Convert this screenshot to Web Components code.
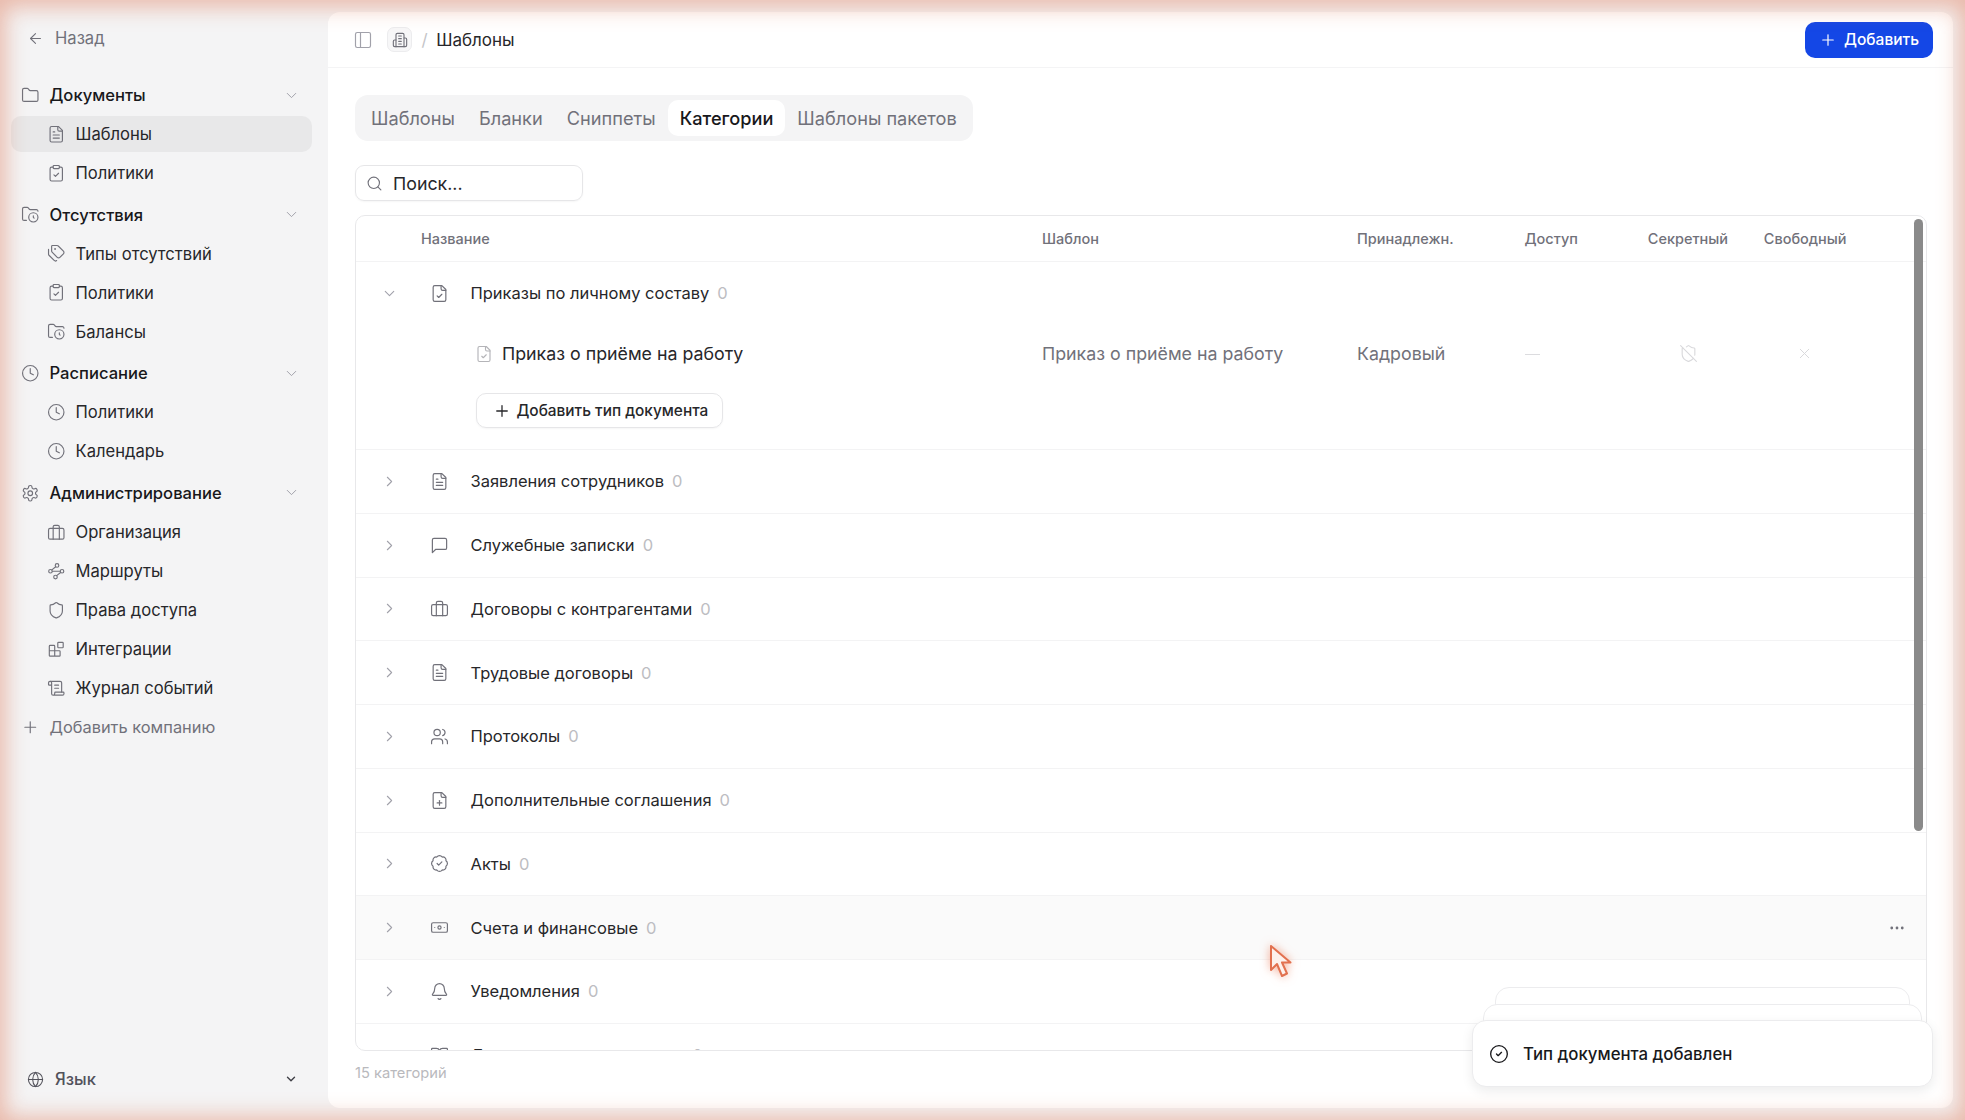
<!DOCTYPE html>
<html lang="ru">
<head>
<meta charset="utf-8">
<title>Шаблоны</title>
<style>
  html, body { margin: 0; height: 100%; overflow: hidden; }
  body { font-family: Inter, "Liberation Sans", sans-serif; background: #f4f4f5; color: #18181b; }
</style>
</head>
<body>
<app-shell>
  <side-nav slot="side">
    <nav-section label="Документы" icon="folder">
      <nav-item icon="file-text" active>Шаблоны</nav-item>
      <nav-item icon="clipboard-check">Политики</nav-item>
    </nav-section>
    <nav-section label="Отсутствия" icon="folder-clock">
      <nav-item icon="tags">Типы отсутствий</nav-item>
      <nav-item icon="clipboard-check">Политики</nav-item>
      <nav-item icon="folder-clock">Балансы</nav-item>
    </nav-section>
    <nav-section label="Расписание" icon="clock">
      <nav-item icon="clock">Политики</nav-item>
      <nav-item icon="clock">Календарь</nav-item>
    </nav-section>
    <nav-section label="Администрирование" icon="settings">
      <nav-item icon="briefcase">Организация</nav-item>
      <nav-item icon="waypoints">Маршруты</nav-item>
      <nav-item icon="shield">Права доступа</nav-item>
      <nav-item icon="blocks">Интеграции</nav-item>
      <nav-item icon="scroll">Журнал событий</nav-item>
    </nav-section>
  </side-nav>
  <main-panel>
    <top-bar slot="top" crumb="Шаблоны"></top-bar>
    <tab-bar>
      <tab-item>Шаблоны</tab-item>
      <tab-item>Бланки</tab-item>
      <tab-item>Сниппеты</tab-item>
      <tab-item active>Категории</tab-item>
      <tab-item>Шаблоны пакетов</tab-item>
    </tab-bar>
    <search-box placeholder="Поиск..."></search-box>
    <cat-table>
      <cat-row name="Приказы по личному составу" icon="file-check" open>
        <cat-type name="Приказ о приёме на работу" template="Приказ о приёме на работу" owner="Кадровый"></cat-type>
        <add-button>Добавить тип документа</add-button>
      </cat-row>
      <cat-row name="Заявления сотрудников" icon="file-text"></cat-row>
      <cat-row name="Служебные записки" icon="message"></cat-row>
      <cat-row name="Договоры с контрагентами" icon="briefcase"></cat-row>
      <cat-row name="Трудовые договоры" icon="file-text"></cat-row>
      <cat-row name="Протоколы" icon="users"></cat-row>
      <cat-row name="Дополнительные соглашения" icon="file-plus"></cat-row>
      <cat-row name="Акты" icon="badge-check"></cat-row>
      <cat-row name="Счета и финансовые" icon="banknote" hover></cat-row>
      <cat-row name="Уведомления" icon="bell"></cat-row>
      <cat-row name="Должностные инструкции" icon="book"></cat-row>
    </cat-table>
    <table-foot>15 категорий</table-foot>
    <toast-stack slot="over">Тип документа добавлен</toast-stack>
  </main-panel>
  <mouse-cursor slot="over"></mouse-cursor>
  <edge-glow slot="over"></edge-glow>
</app-shell>

<script>
// lucide-style icon bodies, 24x24 viewBox
const FILE = '<path d="M15 2H6a2 2 0 0 0-2 2v16a2 2 0 0 0 2 2h12a2 2 0 0 0 2-2V7Z"/><path d="M14 2v4a2 2 0 0 0 2 2h4"/>';
const ICONS = {
  "arrow-left": '<path d="M19 12H5"/><path d="m12 19-7-7 7-7"/>',
  "folder": '<path d="M20 20a2 2 0 0 0 2-2V8a2 2 0 0 0-2-2h-7.9a2 2 0 0 1-1.69-.9L9.6 3.9A2 2 0 0 0 7.93 3H4a2 2 0 0 0-2 2v13a2 2 0 0 0 2 2Z"/>',
  "file-text": FILE + '<path d="M16 13H8"/><path d="M16 17H8"/><path d="M10 9H8"/>',
  "file-check": FILE + '<path d="m9 15 2 2 4-4"/>',
  "file-plus": FILE + '<path d="M9 15h6"/><path d="M12 18v-6"/>',
  "clipboard-check": '<rect x="8" y="2" width="8" height="4" rx="1"/><path d="M16 4h2a2 2 0 0 1 2 2v14a2 2 0 0 1-2 2H6a2 2 0 0 1-2-2V6a2 2 0 0 1 2-2h2"/><path d="m9 14 2 2 4-4"/>',
  "folder-clock": '<circle cx="16" cy="16" r="6"/><path d="M7 20H4a2 2 0 0 1-2-2V5a2 2 0 0 1 2-2h3.9a2 2 0 0 1 1.69.9l.81 1.2a2 2 0 0 0 1.67.9H20a2 2 0 0 1 2 2"/><path d="M16 14v2l1 1"/>',
  "tags": '<path d="M13.172 2a2 2 0 0 1 1.414.586l6.71 6.71a2.4 2.4 0 0 1 0 3.408l-4.592 4.592a2.4 2.4 0 0 1-3.408 0l-6.71-6.71A2 2 0 0 1 6 9.172V3a1 1 0 0 1 1-1z"/><path d="M2 7v6.172a2 2 0 0 0 .586 1.414l6.71 6.71a2.4 2.4 0 0 0 3.191.193"/><circle cx="10.5" cy="6.5" r=".5"/>',
  "clock": '<circle cx="12" cy="12" r="10"/><path d="M12 6v6l4 2"/>',
  "settings": '<path d="M12.22 2h-.44a2 2 0 0 0-2 2v.18a2 2 0 0 1-1 1.73l-.43.25a2 2 0 0 1-2 0l-.15-.08a2 2 0 0 0-2.73.73l-.22.38a2 2 0 0 0 .73 2.73l.15.1a2 2 0 0 1 1 1.72v.51a2 2 0 0 1-1 1.74l-.15.09a2 2 0 0 0-.73 2.73l.22.38a2 2 0 0 0 2.73.73l.15-.08a2 2 0 0 1 2 0l.43.25a2 2 0 0 1 1 1.73V20a2 2 0 0 0 2 2h.44a2 2 0 0 0 2-2v-.18a2 2 0 0 1 1-1.73l.43-.25a2 2 0 0 1 2 0l.15.08a2 2 0 0 0 2.73-.73l.22-.39a2 2 0 0 0-.73-2.73l-.15-.08a2 2 0 0 1-1-1.74v-.5a2 2 0 0 1 1-1.74l.15-.09a2 2 0 0 0 .73-2.73l-.22-.38a2 2 0 0 0-2.73-.73l-.15.08a2 2 0 0 1-2 0l-.43-.25a2 2 0 0 1-1-1.73V4a2 2 0 0 0-2-2z"/><circle cx="12" cy="12" r="3"/>',
  "briefcase": '<path d="M16 21V5a2 2 0 0 0-2-2h-4a2 2 0 0 0-2 2v16"/><rect x="2" y="7" width="20" height="14" rx="2"/>',
  "waypoints": '<circle cx="13" cy="4.5" r="2.3"/><path d="m11.3 6.2-5 4"/><circle cx="4.5" cy="12" r="2.3"/><path d="M7 12h10"/><circle cx="19.5" cy="12" r="2.3"/><path d="m12.5 17.7 5.2-4"/><circle cx="11" cy="19.5" r="2.3"/>',
  "shield": '<path d="M20 13c0 5-3.5 7.5-7.66 8.95a1 1 0 0 1-.67-.01C7.5 20.5 4 18 4 13V6a1 1 0 0 1 1-1c2 0 4.5-1.2 6.24-2.72a1.17 1.17 0 0 1 1.52 0C14.51 3.81 17 5 19 5a1 1 0 0 1 1 1z"/>',
  "shield-off": '<path d="m2 2 20 20"/><path d="M5 5a1 1 0 0 0-1 1v7c0 5 3.5 7.5 7.67 8.94a1 1 0 0 0 .67.01c2.35-.82 4.48-1.97 5.9-3.71"/><path d="M9.309 3.652A12.252 12.252 0 0 0 11.24 2.28a1.17 1.17 0 0 1 1.52 0C14.51 3.81 17 5 19 5a1 1 0 0 1 1 1v7a9.784 9.784 0 0 1-.08 1.264"/>',
  "blocks": '<rect x="14" y="3" width="7" height="7" rx="1"/><path d="M10 21V8a1 1 0 0 0-1-1H4a1 1 0 0 0-1 1v12a1 1 0 0 0 1 1h12a1 1 0 0 0 1-1v-5a1 1 0 0 0-1-1H3"/>',
  "scroll": '<path d="M15 12h-5"/><path d="M15 8h-5"/><path d="M19 17V5a2 2 0 0 0-2-2H4"/><path d="M8 21h12a2 2 0 0 0 2-2v-1a1 1 0 0 0-1-1H11a1 1 0 0 0-1 1v1a2 2 0 1 1-4 0V5a2 2 0 1 0-4 0v2a1 1 0 0 0 1 1h3"/>',
  "plus": '<path d="M5 12h14"/><path d="M12 5v14"/>',
  "chevron-down": '<path d="m6 9 6 6 6-6"/>',
  "chevron-right": '<path d="m9 18 6-6-6-6"/>',
  "globe": '<circle cx="12" cy="12" r="10"/><path d="M12 2a14.5 14.5 0 0 0 0 20 14.5 14.5 0 0 0 0-20"/><path d="M2 12h20"/>',
  "panel-left": '<rect x="3" y="3" width="18" height="18" rx="2"/><path d="M9 3v18"/>',
  "building": '<path d="M6 22V4a2 2 0 0 1 2-2h8a2 2 0 0 1 2 2v18Z"/><path d="M6 12H4a2 2 0 0 0-2 2v6a2 2 0 0 0 2 2h2"/><path d="M18 9h2a2 2 0 0 1 2 2v9a2 2 0 0 1-2 2h-2"/><path d="M10 6h4"/><path d="M10 10h4"/><path d="M10 14h4"/><path d="M10 18h4"/>',
  "search": '<path d="m21 21-4.34-4.34"/><circle cx="11" cy="11" r="8"/>',
  "message": '<path d="M21 15a2 2 0 0 1-2 2H7l-4 4V5a2 2 0 0 1 2-2h14a2 2 0 0 1 2 2z"/>',
  "users": '<path d="M16 21v-2a4 4 0 0 0-4-4H6a4 4 0 0 0-4 4v2"/><path d="M16 3.128a4 4 0 0 1 0 7.744"/><path d="M22 21v-2a4 4 0 0 0-3-3.87"/><circle cx="9" cy="7" r="4"/>',
  "badge-check": '<path d="M3.85 8.62a4 4 0 0 1 4.78-4.77 4 4 0 0 1 6.74 0 4 4 0 0 1 4.78 4.78 4 4 0 0 1 0 6.74 4 4 0 0 1-4.77 4.78 4 4 0 0 1-6.75 0 4 4 0 0 1-4.78-4.77 4 4 0 0 1 0-6.76Z"/><path d="m9 12 2 2 4-4"/>',
  "circle-check": '<circle cx="12" cy="12" r="10"/><path d="m9 12 2 2 4-4"/>',
  "banknote": '<rect x="2" y="6" width="20" height="12" rx="2"/><circle cx="12" cy="12" r="2"/><path d="M6 12h.01"/><path d="M18 12h.01"/>',
  "bell": '<path d="M10.268 21a2 2 0 0 0 3.464 0"/><path d="M3.262 15.326A1 1 0 0 0 4 17h16a1 1 0 0 0 .74-1.673C19.41 13.956 18 12.499 18 8A6 6 0 0 0 6 8c0 4.499-1.411 5.956-2.738 7.326"/>',
  "book": '<path d="M12 7v14"/><path d="M3 18a1 1 0 0 1-1-1V4a1 1 0 0 1 1-1h5a4 4 0 0 1 4 4 4 4 0 0 1 4-4h5a1 1 0 0 1 1 1v13a1 1 0 0 1-1 1h-6a3 3 0 0 0-3 3 3 3 0 0 0-3-3z"/>',
  "x": '<path d="M18 6 6 18"/><path d="m6 6 12 12"/>',
  "dots": '<circle cx="5" cy="12" r="1"/><circle cx="12" cy="12" r="1"/><circle cx="19" cy="12" r="1"/>'
};

class UiIcon extends HTMLElement {
  connectedCallback() {
    const size = this.getAttribute("size") || 18.5;
    const sw = this.getAttribute("sw") || 1.5;
    this.attachShadow({ mode: "open" }).innerHTML = `
      <style>
        :host { display: inline-flex; flex: none; width: ${size}px; height: ${size}px; }
        svg { width: 100%; height: 100%; fill: none; stroke: currentColor; stroke-width: ${sw}; stroke-linecap: round; stroke-linejoin: round; }
      </style>
      <svg viewBox="0 0 24 24">${ICONS[this.getAttribute("name")] || ""}</svg>`;
  }
}
customElements.define("ui-icon", UiIcon);

class AppShell extends HTMLElement {
  constructor() {
    super();
    this.attachShadow({ mode: "open" }).innerHTML = `
      <style>
        :host { display: grid; grid-template-columns: 328px 1fr; height: 100vh; }
      </style>
      <slot name="side"></slot>
      <slot></slot>
      <slot name="over"></slot>`;
  }
}
customElements.define("app-shell", AppShell);

class SideNav extends HTMLElement {
  constructor() {
    super();
    this.attachShadow({ mode: "open" }).innerHTML = `
      <style>
        :host { display: flex; flex-direction: column; height: 100vh; box-sizing: border-box; padding: 20px 16px 23px 11px; background: #f4f4f5; font-size: 16.6px; }
        .back { display: flex; align-items: center; gap: 11px; height: 36px; padding-left: 16px; color: #71717a; }
        nav { display: flex; flex-direction: column; gap: 5.6px; margin-top: 21px; }
        .add { display: flex; align-items: center; gap: 10px; height: 36px; padding-left: 10px; font-size: 16.4px; color: #71717a; margin-top: -2.6px; }
        .lang { display: flex; align-items: center; gap: 11px; height: 36px; margin-top: auto; padding-left: 16px; color: #52525b; font-weight: 500; }
        .lang .chev { margin-left: auto; margin-right: 14px; color: #3f3f46; }
      </style>
      <div class="back"><ui-icon name="arrow-left" size="17"></ui-icon>Назад</div>
      <nav><slot></slot><div class="add"><ui-icon name="plus"></ui-icon>Добавить компанию</div></nav>
      <div class="lang"><ui-icon name="globe" size="17"></ui-icon>Язык<ui-icon class="chev" name="chevron-down" size="14" sw="2.4"></ui-icon></div>`;
  }
}
customElements.define("side-nav", SideNav);

class NavSection extends HTMLElement {
  constructor() {
    super();
    this.attachShadow({ mode: "open" }).innerHTML = `
      <style>
        :host { display: flex; flex-direction: column; gap: 3px; }
        .head { display: flex; align-items: center; gap: 10px; height: 36px; padding: 0 12px 0 10px; font-weight: 500; color: #18181b; }
        .head ui-icon:first-child { color: #71717a; }
        .chev { margin-left: auto; color: #a1a1aa; }
      </style>
      <div class="head">
        <ui-icon name="${this.getAttribute("icon")}"></ui-icon>
        <span>${this.getAttribute("label")}</span>
        <ui-icon class="chev" name="chevron-down" size="17" sw="1.4"></ui-icon>
      </div>
      <slot></slot>`;
  }
}
customElements.define("nav-section", NavSection);

class NavItem extends HTMLElement {
  constructor() {
    super();
    const active = this.hasAttribute("active");
    this.attachShadow({ mode: "open" }).innerHTML = `
      <style>
        :host { display: flex; align-items: center; gap: 10px; height: 36px; padding-left: 36px; border-radius: 10px; color: #27272a; background: ${active ? "#e8e8e9" : "transparent"}; }
        ui-icon { color: #71717a; }
      </style>
      <ui-icon name="${this.getAttribute("icon")}"></ui-icon><slot></slot>`;
  }
}
customElements.define("nav-item", NavItem);

class MainPanel extends HTMLElement {
  constructor() {
    super();
    this.attachShadow({ mode: "open" }).innerHTML = `
      <style>
        :host { display: flex; flex-direction: column; position: relative; margin: 12px 12px 12px 0; background: #fff; border-radius: 12px; overflow: hidden; min-width: 0; }
        .body { display: flex; flex-direction: column; flex: 1; min-height: 0; padding: 27px 26px 0 27px; }
      </style>
      <slot name="top"></slot>
      <div class="body"><slot></slot></div>
      <slot name="over"></slot>`;
  }
}
customElements.define("main-panel", MainPanel);

class TopBar extends HTMLElement {
  constructor() {
    super();
    this.attachShadow({ mode: "open" }).innerHTML = `
      <style>
        :host { display: flex; align-items: center; flex: none; box-sizing: border-box; height: 56px; padding: 0 20px 0 25px; border-bottom: 1px solid #f4f4f5; font-size: 17px; color: #27272a; }
        .toggle { color: #a1a1aa; }
        .org { display: flex; align-items: center; justify-content: center; box-sizing: border-box; width: 25px; height: 25px; margin-left: 14px; border: 1px solid #ececee; border-radius: 7px; background: #f7f7f8; color: #71717a; }
        .sep { margin: 0 8.5px 0 9.5px; color: #c4c4c8; }
        button { display: flex; align-items: center; gap: 7px; margin-left: auto; height: 36px; padding: 0 14px 0 14px; border: 0; border-radius: 10px; background: #1447e6; color: #fff; font: 500 15.5px Inter, "Liberation Sans", sans-serif; }
      </style>
      <ui-icon class="toggle" name="panel-left" size="20" sw="1.4"></ui-icon>
      <span class="org"><ui-icon name="building" size="16" sw="1.7"></ui-icon></span>
      <span class="sep">/</span>
      <span>${this.getAttribute("crumb")}</span>
      <button><ui-icon name="plus" size="18" sw="1.6"></ui-icon>Добавить</button>`;
  }
}
customElements.define("top-bar", TopBar);

class TabBar extends HTMLElement {
  constructor() {
    super();
    this.attachShadow({ mode: "open" }).innerHTML = `
      <style>
        :host { display: flex; align-self: flex-start; flex: none; box-sizing: border-box; height: 46px; padding: 5px 4px; background: #f4f4f5; border-radius: 13px; }
      </style>
      <slot></slot>`;
  }
}
customElements.define("tab-bar", TabBar);

class TabItem extends HTMLElement {
  constructor() {
    super();
    const active = this.hasAttribute("active");
    this.attachShadow({ mode: "open" }).innerHTML = `
      <style>
        :host { display: flex; align-items: center; padding: 0 12px; font-size: 18.2px; border-radius: 10px; color: ${active ? "#18181b" : "#71717a"}; font-weight: ${active ? 500 : 400}; background: ${active ? "#fff" : "transparent"}; }
      </style>
      <slot></slot>`;
  }
}
customElements.define("tab-item", TabItem);

class SearchBox extends HTMLElement {
  constructor() {
    super();
    this.attachShadow({ mode: "open" }).innerHTML = `
      <style>
        :host { display: flex; align-items: center; gap: 10px; flex: none; box-sizing: border-box; width: 228px; height: 36px; margin-top: 24px; padding-left: 10px; border: 1px solid #e6e6e8; border-radius: 9px; font-size: 17.8px; color: #27272a; box-shadow: 0 1px 2px rgba(0,0,0,.04); }
        ui-icon { color: #71717a; }
      </style>
      <ui-icon name="search" size="17" sw="1.6"></ui-icon><span>${this.getAttribute("placeholder")}</span>`;
  }
}
customElements.define("search-box", SearchBox);

const COLS = "686px 315px 167.5px 123.25px 116px 1fr";

class CatTable extends HTMLElement {
  constructor() {
    super();
    const heads = ["Название", "Шаблон", "Принадлежн.", "Доступ", "Секретный", "Свободный"];
    this.attachShadow({ mode: "open" }).innerHTML = `
      <style>
        :host { display: flex; flex-direction: column; position: relative; flex: 1; min-height: 0; margin-top: 14px; border: 1px solid #e8e8ea; border-radius: 10px; overflow: hidden; --cols: ${COLS}; }
        .head { display: grid; grid-template-columns: var(--cols); flex: none; align-items: center; box-sizing: border-box; height: 46px; padding-bottom: 1px; border-bottom: 1px solid #f3f3f4; font-size: 14.5px; font-weight: 500; color: #71717a; }
        .head span:first-child { padding-left: 65px; }
        .thumb { position: absolute; top: 3px; right: 3px; width: 9px; height: 612px; border-radius: 5px; background: #8a8a8a; }
      </style>
      <div class="head">${heads.map(h => `<span>${h}</span>`).join("")}</div>
      <slot></slot>
      <div class="thumb"></div>`;
  }
}
customElements.define("cat-table", CatTable);

class CatRow extends HTMLElement {
  constructor() {
    super();
    const open = this.hasAttribute("open");
    const hover = this.hasAttribute("hover");
    this.attachShadow({ mode: "open" }).innerHTML = `
      <style>
        :host { display: block; flex: none; box-sizing: border-box; min-height: 63.75px; border-bottom: 1px solid #f3f3f4; background: ${hover ? "#fafafa" : "transparent"}; }
        .line { display: flex; align-items: center; height: ${open ? 62 : 62.75}px; font-size: 16.5px; color: #27272a; }
        .chev { margin-left: 25px; color: #a1a1aa; }
        .icon { margin-left: 31.5px; color: #71717a; }
        .name { margin-left: 22px; }
        .count { margin-left: 8px; color: #bdbdc2; }
        .more { margin-left: auto; margin-right: 20px; color: #71717a; }
        .kids { display: ${open ? "flex" : "none"}; flex-direction: column; align-items: flex-start; padding-bottom: 21px; }
      </style>
      <div class="line">
        <ui-icon class="chev" name="${open ? "chevron-down" : "chevron-right"}" size="17" sw="1.5"></ui-icon>
        <ui-icon class="icon" name="${this.getAttribute("icon")}" size="19"></ui-icon>
        <span class="name">${this.getAttribute("name")}</span>
        <span class="count">0</span>
        ${hover ? '<ui-icon class="more" name="dots" size="18" sw="1.7"></ui-icon>' : ""}
      </div>
      <div class="kids"><slot></slot></div>`;
  }
}
customElements.define("cat-row", CatRow);

class CatType extends HTMLElement {
  constructor() {
    super();
    this.attachShadow({ mode: "open" }).innerHTML = `
      <style>
        :host { display: grid; grid-template-columns: ${COLS}; align-items: center; width: 100%; height: 59px; font-size: 17.8px; color: #71717a; }
        .name { display: flex; align-items: center; gap: 9px; padding-left: 119px; color: #27272a; }
        .name ui-icon { color: #b4b4b8; }
        .off { display: flex; color: #d9d9dc; }
        .secret { padding-left: 31px; }
        .free { padding-left: 32.5px; }
        .dash { display: block; width: 15px; height: 1px; margin-top: 2px; background: #dcdcdf; }
      </style>
      <div class="name"><ui-icon name="file-check" size="18"></ui-icon>${this.getAttribute("name")}</div>
      <div>${this.getAttribute("template")}</div>
      <div>${this.getAttribute("owner")}</div>
      <div><span class="dash"></span></div>
      <div class="secret off"><ui-icon name="shield-off" size="19" sw="1.4"></ui-icon></div>
      <div class="free off"><ui-icon name="x" size="17" sw="1.4"></ui-icon></div>`;
  }
}
customElements.define("cat-type", CatType);

class AddButton extends HTMLElement {
  constructor() {
    super();
    this.attachShadow({ mode: "open" }).innerHTML = `
      <style>
        :host { display: flex; align-items: center; gap: 6px; box-sizing: border-box; height: 35px; margin: 10px 0 0 119.5px; padding: 0 14px 0 16px; border: 1px solid #e6e6e8; border-radius: 10px; font-size: 15.4px; font-weight: 500; color: #27272a; box-shadow: 0 1px 2px rgba(0,0,0,.04); }
      </style>
      <ui-icon name="plus" size="18" sw="1.7"></ui-icon><slot></slot>`;
  }
}
customElements.define("add-button", AddButton);

class TableFoot extends HTMLElement {
  constructor() {
    super();
    this.attachShadow({ mode: "open" }).innerHTML = `
      <style>
        :host { display: flex; align-items: center; flex: none; height: 44px; margin-bottom: 13px; font-size: 14.7px; color: #b9b9bd; }
      </style>
      <slot></slot>`;
  }
}
customElements.define("table-foot", TableFoot);

class ToastStack extends HTMLElement {
  constructor() {
    super();
    this.attachShadow({ mode: "open" }).innerHTML = `
      <style>
        :host { position: absolute; right: 20px; bottom: 21px; width: 461px; height: 100px; }
        .card { position: absolute; left: 0; right: 0; bottom: 0; background: #fff; border: 1px solid #ececee; border-radius: 14px; box-sizing: border-box; }
        .c3 { left: 23px; right: 23px; height: 60px; bottom: 40px; }
        .c2 { left: 11px; right: 11px; height: 60px; bottom: 23px; }
        .c1 { display: flex; align-items: center; gap: 14px; height: 67px; padding-left: 16px; font-size: 16.8px; font-weight: 500; color: #18181b; box-shadow: 0 4px 12px rgba(0,0,0,.08); }
      </style>
      <div class="card c3"></div>
      <div class="card c2"></div>
      <div class="card c1"><ui-icon name="circle-check" size="20" sw="1.6"></ui-icon><slot></slot></div>`;
  }
}
customElements.define("toast-stack", ToastStack);

class MouseCursor extends HTMLElement {
  constructor() {
    super();
    this.attachShadow({ mode: "open" }).innerHTML = `
      <style>
        :host { position: fixed; left: 1269px; top: 944px; width: 24px; height: 34px; filter: drop-shadow(0 0 5px rgba(235,110,70,.55)); }
        svg { display: block; width: 100%; height: 100%; }
      </style>
      <svg viewBox="0 0 24 34"><path d="M2 2v24l6-6 5 12 5-2.5-5-11h8.5Z" fill="#fdf1ec" stroke="#e2714f" stroke-width="2" stroke-linejoin="round"/></svg>`;
  }
}
customElements.define("mouse-cursor", MouseCursor);

class EdgeGlow extends HTMLElement {
  constructor() {
    super();
    this.attachShadow({ mode: "open" }).innerHTML = `
      <style>
        :host { position: fixed; inset: 0; pointer-events: none; box-shadow: inset 0 2px 22px 5px rgba(222,120,85,.48); }
      </style>`;
  }
}
customElements.define("edge-glow", EdgeGlow);
</script>
</body>
</html>
